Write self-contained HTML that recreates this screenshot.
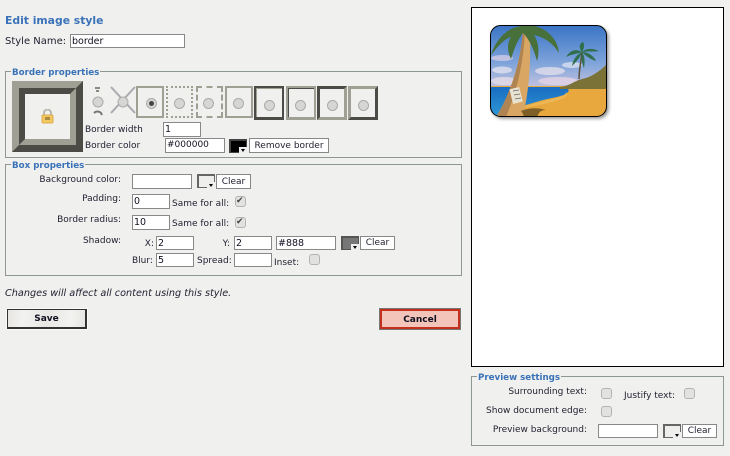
<!DOCTYPE html>
<html><head><meta charset="utf-8"><style>
html,body{margin:0;padding:0}
body{width:730px;height:456px;overflow:hidden;background:#f0f0ee;position:relative;font:9px/14px "DejaVu Sans","Liberation Sans",sans-serif;color:#223}
div,span{position:absolute;box-sizing:border-box;white-space:nowrap}
.i{background:#fff;border:1px solid #888;line-height:13px;padding-left:1px;color:#112;font-size:9.500px}
.f{border:1px solid #8f9793}
.l{background:#f0f0ee;font-weight:bold;color:#3a72b8;padding:0 1px;font-size:8.700px}
.r{text-align:right}
.c{width:11px;height:11px;background:#e2e2e0;border:1px solid #b4b4b2;border-radius:3px}
.b{background:#fff;border:1px solid #888;text-align:center;line-height:14px}
.s{background:#777;border:1px solid #555;border-width:2px 1px 1px 2px;width:18px;height:14px}
.s:after{content:"";position:absolute;right:-1px;bottom:-1px;width:8px;height:6px;background:#eee}
.s:before{content:"";position:absolute;z-index:1;right:1px;bottom:0;border:2.500px solid transparent;border-top:3px solid #000;border-bottom:0}
.n{background:#eeeeec;border-color:#666}
.d{width:11px;height:11px;border-radius:50%;background:#d6d6d4;border:1px solid #aaa}
.t{width:30px;height:34px;top:86px}
</style></head><body>
<div style="left:5px;top:14px;font-weight:bold;font-size:10.800px;line-height:14px;color:#3a72b8">Edit image style</div>
<div style="left:5px;top:35px;font-size:10px">Style Name:</div>
<div class="i" style="left:70px;top:34px;width:115px;height:14px">border</div>

<div class="f" style="left:5px;top:71px;width:457px;height:87px"></div>
<div class="l" style="left:11px;top:66px">Border properties</div>
<div style="left:12px;top:81px;width:71px;height:71px;border:7px solid;border-color:#a09f94 #4c4b45 #4c4b45 #a09f94"><div style="left:0;top:0;width:57px;height:57px;border:6px solid;border-color:#4c4b45 #a09f94 #a09f94 #4c4b45;background:#f0f0ee"></div></div>
<svg style="position:absolute;left:41px;top:109px" width="13" height="15" viewBox="0 0 13 15"><path d="M3 6V4a3.500 3.500 0 0 1 7 0v2" fill="none" stroke="#b8b8b0" stroke-width="2"/><rect x="1" y="6" width="11" height="8" rx="1" fill="#f2c861" stroke="#e0ab50"/><rect x="4" y="8" width="5" height="3" fill="#a98b40"/></svg>
<svg style="position:absolute;left:86px;top:84px" width="50" height="38" viewBox="0 0 50 38"><path d="M9 3h5v2H9zM10 6h3v2h-3z" fill="#8a8a85"/><circle cx="12" cy="18" r="5" fill="#d6d6d4" stroke="#aaa"/><path d="M8 29c2-2 5-2 7 0l1 2" fill="none" stroke="#777" stroke-width="2"/><path d="M25 3L49 29M49 3L25 29" stroke="#a8aab0" stroke-width="2"/><circle cx="37" cy="18" r="5" fill="#d6d6d4" stroke="#aaa"/></svg>

<div style="left:136px;top:86px;width:28px;height:32px;border:2px solid #a09f94"></div>
<div class="d" style="left:146px;top:98px"></div><div style="left:149px;top:101px;width:5px;height:5px;border-radius:50%;background:#444"></div>
<div style="left:166px;top:86px;width:27px;height:32px;border:2px dotted #a09f94"></div><div class="d" style="left:174px;top:98px"></div>
<div style="left:196px;top:86px;width:27px;height:32px;border:2px dashed #a09f94"></div><div class="d" style="left:203px;top:98px"></div>
<div style="left:225px;top:86px;width:28px;height:32px;border:2px solid #a09f94"></div><div class="d" style="left:233px;top:98px"></div>

<div class="t" style="left:254px;border:2px solid #4c4b45;border-bottom-width:3px;box-shadow:inset 1px 1px 0 #a09f94"></div><div class="d" style="left:264px;top:100px"></div>
<div class="t" style="left:286px;border:2px solid #a09f94;border-bottom-width:3px;box-shadow:inset 1px 1px 0 #4c4b45"></div><div class="d" style="left:295px;top:100px"></div>
<div class="t" style="left:317px;border:3px solid;border-color:#4c4b45 #a09f94 #a09f94 #4c4b45"></div><div class="d" style="left:327px;top:100px"></div>
<div class="t" style="left:348px;border:3px solid;border-color:#a09f94 #4c4b45 #4c4b45 #a09f94"></div><div class="d" style="left:358px;top:100px"></div>

<div style="left:85px;top:123px">Border width</div>
<div class="i" style="left:163px;top:122px;width:38px;height:15px">1</div>
<div style="left:85px;top:139px">Border color</div>
<div class="i" style="left:165px;top:138px;width:60px;height:15px;font-size:9px">#000000</div>
<div class="s" style="left:229px;top:139px;background:#000;border-color:#444"></div>
<div class="b" style="left:249px;top:138px;width:80px;height:15px">Remove border</div>

<div class="f" style="left:5px;top:164px;width:457px;height:112px"></div>
<div class="l" style="left:11px;top:159px">Box properties</div>
<div class="r" style="right:609px;top:173px">Background color:</div>
<div class="i" style="left:132px;top:174px;width:60px;height:15px"></div>
<div class="s n" style="left:197px;top:174px"></div>
<div class="b" style="left:216px;top:174px;width:35px;height:15px">Clear</div>
<div class="r" style="right:609px;top:192px">Padding:</div>
<div class="i" style="left:132px;top:194px;width:38px;height:15px">0</div>
<div style="left:172px;top:197px">Same for all:</div>
<div class="c" style="left:235px;top:196px;color:#444;font-size:9px;line-height:9px">✔</div>
<div class="r" style="right:609px;top:213px">Border radius:</div>
<div class="i" style="left:132px;top:215px;width:38px;height:15px">10</div>
<div style="left:172px;top:217px">Same for all:</div>
<div class="c" style="left:235px;top:217px;color:#444;font-size:9px;line-height:9px">✔</div>
<div class="r" style="right:609px;top:234px">Shadow:</div>
<div class="r" style="right:576px;top:237px">X:</div>
<div class="i" style="left:156px;top:236px;width:38px;height:14px">2</div>
<div class="r" style="right:500px;top:237px">Y:</div>
<div class="i" style="left:234px;top:236px;width:38px;height:14px">2</div>
<div class="i" style="left:276px;top:236px;width:60px;height:14px">#888</div>
<div class="s" style="left:341px;top:236px"></div>
<div class="b" style="left:360px;top:236px;width:35px;height:14px;line-height:13px">Clear</div>
<div style="left:132px;top:254px">Blur:</div>
<div class="i" style="left:156px;top:253px;width:38px;height:14px">5</div>
<div style="left:197px;top:254px">Spread:</div>
<div class="i" style="left:234px;top:253px;width:38px;height:14px"></div>
<div style="left:274px;top:256px">Inset:</div>
<div class="c" style="left:309px;top:254px"></div>

<div style="left:5px;top:287px;font-style:italic;font-size:9.700px">Changes will affect all content using this style.</div>
<div style="left:7px;top:309px;width:80px;height:20px;border:1px solid #333;border-right-width:2px;border-bottom-width:2px;background:linear-gradient(100deg,#e6e5e2,#f2f2f0 20%,#e8e7e4 50%,#f2f2f0 80%,#e6e5e2);box-shadow:0 0 0 1px #fafaf8;text-align:center;font-weight:bold;line-height:19px;color:#112">Save</div>
<div style="left:380px;top:309px;width:80px;height:20px;border:2px solid #c5301c;background:#f2c4ba;box-shadow:0 0 0 1px #777;text-align:center;font-weight:bold;line-height:18px;color:#112">Cancel</div>

<div style="left:471px;top:7px;width:253px;height:360px;background:#fff;border:1px solid #000"></div>
<svg style="position:absolute;left:488px;top:23px" width="124" height="100" viewBox="0 0 124 100">
<defs><clipPath id="k"><rect x="2.500" y="2.500" width="116" height="91" rx="10"/></clipPath><linearGradient id="sky" x1="0" y1="0" x2="0" y2="1"><stop offset="0" stop-color="#3a74c6"/><stop offset=".6" stop-color="#7fa4da"/><stop offset="1" stop-color="#c8c4e0"/></linearGradient><linearGradient id="sea" x1="0" y1="0" x2="0" y2="1"><stop offset="0" stop-color="#1a6cc0"/><stop offset="1" stop-color="#2f9cd8"/></linearGradient><filter id="sh"><feGaussianBlur stdDeviation="1.800"/></filter></defs>
<rect x="4.500" y="4.500" width="116" height="91" rx="10" fill="#888" filter="url(#sh)"/>
<g clip-path="url(#k)">
<rect x="2" y="2" width="118" height="64" fill="url(#sky)"/>
<g opacity=".75"><ellipse cx="14" cy="35" rx="11" ry="3" fill="#d8cfe6"/><ellipse cx="14" cy="47" rx="10" ry="3.500" fill="#e6e4f0"/><ellipse cx="16" cy="58" rx="13" ry="4" fill="#e8dfe8"/><ellipse cx="62" cy="48" rx="15" ry="4" fill="#e6e2ee"/><ellipse cx="70" cy="58" rx="20" ry="4" fill="#e8d6e6"/><ellipse cx="84" cy="42" rx="10" ry="3" fill="#dfe4f2"/></g>
<rect x="2" y="63" width="118" height="33" fill="#e9a83e"/>
<path d="M2 64H78C84 68 80 72 64 75C50 78 38 82 26 86L2 96Z" fill="url(#sea)"/>
<path d="M72 64c10-1 14-6 22-8 10-2 18-8 26-16v26H72z" fill="#7b7238"/>
<path d="M26 86c16-4 34-9 46-12 4-1 6-3 6-5 3 4-2 7-14 10-12 3-26 6-38 7z" fill="#eeb755"/>
<path d="M91 56c0-9 2-17 3-27" stroke="#5c5138" stroke-width="1.500" fill="none"/>
<path d="M94 29c-7-4-12-1-16 5 6-3 11-3 16-5zM94 29c-4-5-2-9 1-10 2 3 1 7-1 10zM94 29c4-4 11-4 17-1-6 1-12 0-17 1zM94 29c6 0 12 4 14 9-6-2-10-5-14-9zM94 29c-6 3-9 8-10 14 4-4 8-8 10-14zM94 29c-1 6 0 11 2 16 1-6 1-11-2-16z" fill="#2f6f4e"/>
<path d="M7 96C22 72 33 40 35 6h7C43 40 41 72 34 96Z" fill="#d9a763"/>
<path d="M7 96C22 72 33 40 35 6l2 0C36 40 28 72 17 96Z" fill="#b08452"/>
<path d="M38 3C26 2 10 10 3 32 11 22 16 16 23 14 19 20 19 28 23 36 26 26 30 16 35 10 41 16 46 26 49 38 52 28 50 18 46 12 56 14 65 20 71 30 70 16 58 5 46 3Z" fill="#47703a"/>
<path d="M33 88c7-3 15-4 25-1-6 0-8 3-9 9H36c0-3-1-6-3-8z" fill="#7e6026"/>
<rect x="23" y="65" width="10" height="15" fill="#e8e2d2" transform="rotate(-14 28 72)"/>
<path d="M25 68l6-1M26 72l6-1M27 76l6-1" stroke="#666" stroke-width=".7"/>
</g>
<rect x="2.500" y="2.500" width="116" height="91" rx="10" fill="none" stroke="#000"/>
</svg>

<div class="f" style="left:471px;top:376px;width:253px;height:70px"></div>
<div class="l" style="left:477px;top:371px">Preview settings</div>
<div class="r" style="right:143px;top:385px">Surrounding text:</div>
<div class="c" style="left:601px;top:388px"></div>
<div style="left:624px;top:389px">Justify text:</div>
<div class="c" style="left:684px;top:388px"></div>
<div class="r" style="right:143px;top:404px">Show document edge:</div>
<div class="c" style="left:601px;top:406px"></div>
<div class="r" style="right:143px;top:423px">Preview background:</div>
<div class="i" style="left:598px;top:424px;width:60px;height:14px"></div>
<div class="s n" style="left:663px;top:424px"></div>
<div class="b" style="left:682px;top:424px;width:35px;height:14px;line-height:13px">Clear</div>
</body></html>
